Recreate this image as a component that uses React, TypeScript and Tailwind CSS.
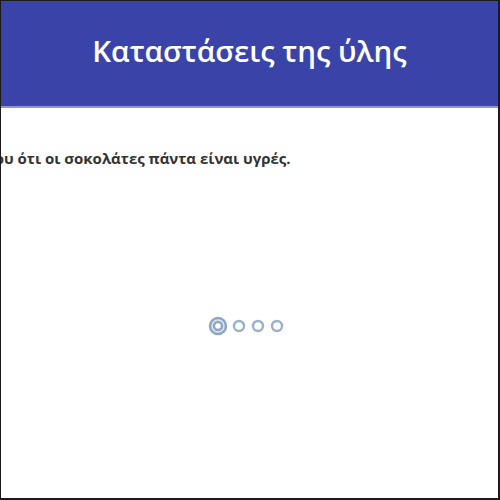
import React from "react";

function Loader() {
  return (
    <div className="flex items-center gap-[3px]">
      <svg width="20" height="20" viewBox="0 0 20 20">
        <circle cx="10" cy="10" r="8" fill="#dfe6ef" stroke="#8fa6c4" strokeWidth="2.5" />
        <circle cx="10" cy="10" r="4" fill="#ffffff" stroke="#8fa6c4" strokeWidth="2.5" />
      </svg>
      {[0, 1, 2].map((i) => (
        <svg key={i} width="16" height="16" viewBox="0 0 16 16">
          <circle cx="8" cy="8" r="5" fill="none" stroke="#9bb0cb" strokeWidth="2.4" />
        </svg>
      ))}
    </div>
  );
}

export default function App() {
  return (
    <div className="w-[500px] h-[500px] overflow-hidden bg-white border-l border-t border-r-2 border-b-2 border-[#1a1a1a] flex flex-col font-['Open_Sans',sans-serif]">
      {/* Header */}
      <div className="h-[107px] shrink-0 bg-[#3a44a8] border-b-2 border-[#8f93dd] flex items-center justify-center">
        <h1 className="text-[29.5px] font-semibold text-white -mt-[4px]">
          Καταστάσεις της ύλης
        </h1>
      </div>

      <div className="overflow-hidden">
        <p className="mt-[39px] ml-[-331px] whitespace-nowrap text-[15px] font-bold text-[#333333]">
          Ο παππούς μου έλεγε πάντα στον εγγονό του ότι οι σοκολάτες πάντα είναι υγρές.
        </p>
      </div>

      <div className="flex justify-center mt-[146px] pr-[7px]">
        <Loader />
      </div>
    </div>
  );
}
